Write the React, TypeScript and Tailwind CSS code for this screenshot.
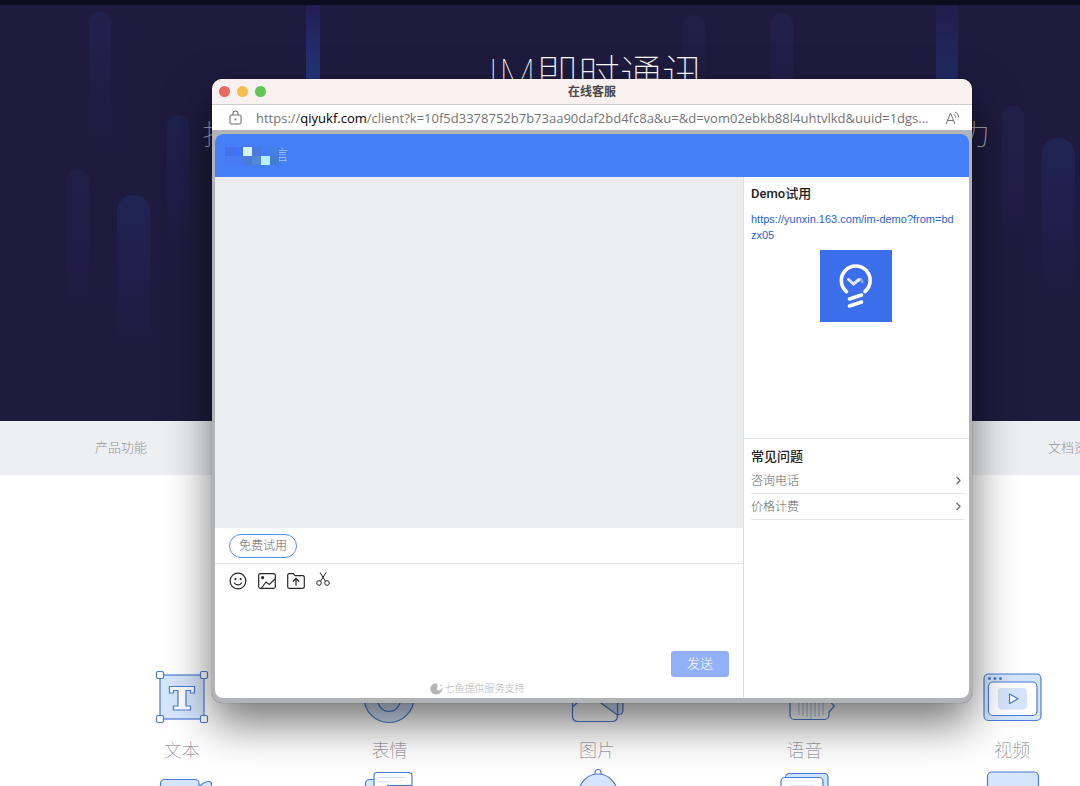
import type { ReactNode } from "react";
import { ChevronRight } from "lucide-react";

interface Feature {
  id: string;
  label?: string;
  icon: ReactNode;
}

const bars = [
  { x: 89, y: 12, w: 22, h: 178, tone: "navy", opacity: 0.6 },
  { x: 67, y: 170, w: 22, h: 165, tone: "violet", opacity: 0.6 },
  { x: 117, y: 195, w: 33, h: 185, tone: "navy", opacity: 0.9 },
  { x: 167, y: 115, w: 22, h: 180, tone: "navy", opacity: 0.6 },
  { x: 683, y: 15, w: 22, h: 160, tone: "violet", opacity: 0.6 },
  { x: 771, y: 13, w: 22, h: 170, tone: "violet", opacity: 0.8 },
  { x: 1002, y: 106, w: 22, h: 160, tone: "violet", opacity: 0.9 },
  { x: 1042, y: 138, w: 33, h: 190, tone: "navy", opacity: 0.9 },
];

const mosaic = [
  "bg-[#4571e8]",
  "bg-[#4172fb]",
  "bg-[#d5f6ff]",
  "bg-[#4b79df]",
  "bg-[#447df5]",
  "bg-[#4281e0]",
  "bg-[#4a7af3]",
  "bg-[#4a7af3]",
  "bg-[#4b7bd9]",
  "bg-[#5288d8]",
  "bg-[#baf1ff]",
  "bg-[#427cd6]",
];

const features: Feature[] = [
  {
    id: "text",
    label: "文本",
    icon: (
      <>
        <rect x="8" y="8" width="44" height="44" fill="#d5e5fb" />
        <path
          d="M17.5 19.5h25v6.5h-4v-2.5h-4.500v15.500h4.500v4h-17v-4H26V23.500h-4.500V26h-4z"
          fill="#fff"
        />
        <g fill="#fff">
          <rect x="4.500" y="4.500" width="7" height="7" rx="1.500" />
          <rect x="48.500" y="4.500" width="7" height="7" rx="1.500" />
          <rect x="4.500" y="48.500" width="7" height="7" rx="1.500" />
          <rect x="48.500" y="48.500" width="7" height="7" rx="1.500" />
        </g>
      </>
    ),
  },
  {
    id: "emoji",
    label: "表情",
    icon: (
      <>
        <circle cx="30" cy="30.500" r="25" fill="#d5e5fb" />
        <path d="M19 36c2 5.500 6 8.500 11 8.500s9-3 11-8.500" />
      </>
    ),
  },
  {
    id: "image",
    label: "图片",
    icon: (
      <>
        <rect x="12" y="6" width="44" height="41.500" rx="4" fill="#d5e5fb" />
        <rect x="5.500" y="12" width="45" height="42.500" rx="5" fill="#fff" />
        <path d="M5.500 40l6-5.500" />
        <path d="M33 36l17.500 12V36z" fill="#d5e5fb" stroke="none" />
        <path d="M50.500 30v20M27 31l23.500 17" />
      </>
    ),
  },
  {
    id: "voice",
    label: "语音",
    icon: (
      <>
        <path
          d="M15 12h35a4 4 0 0 1 4 4v18l5.500 5-5.500 6v3a4.500 4.500 0 0 1-4.500 4.500H19.500A4.500 4.500 0 0 1 15 48z"
          fill="#fff"
        />
        <path d="M24 30v18M28 28v21M32 30v20M36 28v24M40 30v20M44 28v21M48 30v18" stroke="#b9cff1" />
      </>
    ),
  },
  {
    id: "video",
    label: "视频",
    icon: (
      <>
        <rect x="2" y="7" width="57" height="46.500" rx="4.500" fill="#d5e5fb" />
        <rect x="6.500" y="15" width="48.500" height="33.500" rx="4.500" fill="#fff" />
        <rect x="16" y="21" width="29" height="21.500" rx="4" fill="#d5e5fb" stroke="none" />
        <path d="M27.500 27v9.500l8.500-4.700z" fill="#fff" strokeLinejoin="round" />
        <g fill="#4b7bd5" stroke="none">
          <circle cx="7.500" cy="11.500" r="1.500" />
          <circle cx="13" cy="11.500" r="1.500" />
          <circle cx="18.500" cy="11.500" r="1.500" />
        </g>
      </>
    ),
  },
  {
    id: "video-call",
    icon: (
      <>
        <path d="M47 20c3-3.500 7-5.500 10-5.500 1.500 0 2.500 1 2.500 2.500v31H47z" fill="#d5e5fb" />
        <rect x="8.500" y="12.500" width="38.500" height="40" rx="4" fill="#d5e5fb" />
      </>
    ),
  },
  {
    id: "message",
    icon: (
      <>
        <rect x="6.500" y="12.500" width="20" height="40" rx="4" fill="#d5e5fb" />
        <rect x="15" y="5.500" width="38" height="46" rx="3.500" fill="#fff" />
        <path d="M19 10.500h27M19 15h13" stroke="#c9dcfa" />
        <path d="M28 18.500h25" />
      </>
    ),
  },
  {
    id: "push",
    icon: (
      <>
        <path d="M28 8V5.500a3 3 0 0 1 6 0V8" fill="#fff" />
        <path d="M12 50V26a19 19 0 0 1 38 0v24z" fill="#d5e5fb" />
      </>
    ),
  },
  {
    id: "history",
    icon: (
      <>
        <rect x="10.500" y="6.500" width="42.500" height="44" rx="4" fill="#cfe4fd" />
        <rect x="6" y="10.500" width="42" height="44" rx="4" fill="#fff" />
        <path d="M14 19h25" stroke="#c9dcfa" />
      </>
    ),
  },
  {
    id: "custom",
    icon: <rect x="5.500" y="5" width="51" height="46" rx="4.500" fill="#d5e5fb" />,
  },
];

function Hero() {
  return (
    <header className="relative h-[421px] overflow-hidden border-t-[5px] border-[#0d0b1e] bg-[#1e1b3e]">
      <svg className="absolute inset-x-0 -top-[5px] h-[421px] w-full" aria-hidden="true">
        <defs>
          <linearGradient id="navy" x1="0" y1="0" x2="0" y2="1">
            <stop offset="0" stopColor="#1e2657" />
            <stop offset="0.5" stopColor="#231c4b" />
            <stop offset="1" stopColor="#1e1b3e" stopOpacity="0" />
          </linearGradient>
          <linearGradient id="violet" x1="0" y1="0" x2="0" y2="1">
            <stop offset="0" stopColor="#21224c" />
            <stop offset="0.6" stopColor="#241c4a" />
            <stop offset="1" stopColor="#1e1b3e" stopOpacity="0" />
          </linearGradient>
          <linearGradient id="beam" x1="0" y1="0" x2="0" y2="1">
            <stop offset="0" stopColor="#231d54" />
            <stop offset="1" stopColor="#223679" />
          </linearGradient>
        </defs>
        {bars.map((bar) => (
          <rect
            key={bar.x}
            x={bar.x}
            y={bar.y}
            width={bar.w}
            height={bar.h}
            rx={bar.w / 2}
            fill={`url(#${bar.tone})`}
            opacity={bar.opacity}
          />
        ))}
        <rect x="306" y="5" width="14" height="75" fill="url(#beam)" />
        <rect x="936" y="5" width="22" height="75" fill="url(#beam)" opacity="0.6" />
      </svg>
      <div className="relative flex w-[1192px] flex-col items-center gap-3 pt-[46px] text-white">
        <h1 className="text-[42px] leading-[48px] font-light whitespace-nowrap">
          <span className="font-thin">IM即时通讯</span>
        </h1>
        <p className="flex w-[787px] justify-between text-[28px] leading-[48px] font-thin opacity-70">
          <span>打</span>
          <span>力</span>
        </p>
      </div>
    </header>
  );
}

function FeatureGrid() {
  return (
    <section className="ml-[78px] grid w-[1038px] grid-cols-5 gap-y-1 pt-48">
      {features.map((feature) => (
        <div key={feature.id} className="flex flex-col items-center gap-3">
          <svg width="60" height="60" viewBox="0 0 60 60" fill="none" stroke="#4b7bd5" strokeWidth="1.2">
            {feature.icon}
          </svg>
          {feature.label && (
            <span className="text-lg leading-6 font-thin text-[#777985]">{feature.label}</span>
          )}
        </div>
      ))}
    </section>
  );
}

function TitleBar() {
  return (
    <div className="flex h-[26px] items-center border-b border-[#cfcacb] bg-[#f9f0f0] px-[7px]">
      <div className="flex flex-1 gap-[7px]">
        <button aria-label="关闭" className="size-[11px] rounded-full bg-[#eb6a5e]" />
        <button aria-label="最小化" className="size-[11px] rounded-full bg-[#f4be50]" />
        <button aria-label="缩放" className="size-[11px] rounded-full bg-[#61c455]" />
      </div>
      <h2 className="text-xs font-bold text-[#4b4647]">在线客服</h2>
      <div className="flex-1" />
    </div>
  );
}

function AddressBar() {
  return (
    <div className="flex h-[25px] items-center bg-white pr-3 pl-[17px] text-[#737373]">
      <svg width="13" height="15" viewBox="0 0 13 15" fill="none" stroke="currentColor" strokeWidth="1.1" className="shrink-0">
        <rect x="1" y="5" width="11" height="9" rx="1.500" />
        <path d="M4 5V3.500a2.500 2.500 0 0 1 5 0V5" />
        <circle cx="6.500" cy="9.500" r="0.500" fill="currentColor" />
      </svg>
      <span className="ml-3.5 flex-1 font-['Open_Sans'] text-[13px] leading-5 whitespace-nowrap">
        https://<span className="text-black">qiyukf.com</span>
        /client?k=10f5d3378752b7b73aa90daf2bd4fc8a&amp;u=&amp;d=vom02ebkb88l4uhtvlkd&amp;uuid=1dgs...
      </span>
      <button aria-label="大声朗读" className="shrink-0">
        <svg width="15" height="14" viewBox="0 0 15 14" fill="none" stroke="currentColor" strokeWidth="1">
          <path d="M1 13L5.500 2l4.500 11M2.500 9.500h6" />
          <path d="M8.500 3.500c1.300.6 2 1.700 2 3.200M10 1c2.300 1 3.600 3 3.600 5.500" />
        </svg>
      </button>
    </div>
  );
}

function ChatPane() {
  return (
    <main className="flex flex-1 flex-col">
      <div className="flex-1 bg-[#ecedef]" />
      <div className="flex h-[36px] items-center border-b border-[#e2e4e8] px-[14px]">
        <button className="h-6 rounded-full border border-[#5b8df0] px-[9px] text-xs font-light text-[#666]">
          免费试用
        </button>
      </div>
      <form className="flex h-[134px] flex-col" onSubmit={(e) => e.preventDefault()}>
        <div className="flex items-center gap-[11px] px-[14px] pt-2 text-[#262626]">
          <button type="button" aria-label="表情">
            <svg width="18" height="18" viewBox="0 0 18 18" fill="none" stroke="currentColor" strokeWidth="1.2">
              <circle cx="9" cy="9" r="7.900" />
              <path d="M5.500 11c.8 1.300 2 1.900 3.500 1.900s2.700-.6 3.500-1.900" strokeLinecap="round" />
              <circle cx="6.400" cy="7" r="0.500" fill="currentColor" />
              <circle cx="11.600" cy="7" r="0.500" fill="currentColor" />
            </svg>
          </button>
          <button type="button" aria-label="图片">
            <svg width="18" height="18" viewBox="0 0 18 18" fill="none" stroke="currentColor" strokeWidth="1.2">
              <rect x="0.700" y="1.700" width="16.600" height="14.600" rx="1.500" />
              <path d="M3.500 16l4.500-6 3.300 2.500 5.700-5.500" />
              <circle cx="4.600" cy="5.600" r="1" fill="currentColor" />
            </svg>
          </button>
          <button type="button" aria-label="文件">
            <svg width="18" height="18" viewBox="0 0 18 18" fill="none" stroke="currentColor" strokeWidth="1.2">
              <path d="M.7 3.200a1.500 1.500 0 0 1 1.500-1.500h4.300l1.500 2h7.800a1.500 1.500 0 0 1 1.500 1.500v9.600a1.500 1.500 0 0 1-1.500 1.500H2.200a1.500 1.500 0 0 1-1.500-1.500z" />
              <path d="M9 13.800V6.500M5.800 9.500L9 6.400l3.200 3.100" />
            </svg>
          </button>
          <button type="button" aria-label="截图" className="mb-1">
            <svg width="14" height="14" viewBox="0 0 14 14" fill="none" stroke="currentColor" strokeWidth="1">
              <path d="M4 .5l5.500 8.800M10 .5L4.500 9.300" />
              <circle cx="3" cy="11" r="2.300" />
              <circle cx="11" cy="11" r="2.300" />
            </svg>
          </button>
        </div>
        <textarea aria-label="输入消息" className="mt-1 flex-1 resize-none px-[14px] text-xs outline-none" />
        <div className="flex justify-end px-[14px]">
          <button className="h-[26px] w-[58px] rounded-[3px] bg-[#93b0fa] text-[13px] font-light text-white">
            发送
          </button>
        </div>
        <div className="flex h-[21px] items-center justify-center gap-0.5 pt-0.5 pr-1 text-[10px] font-light text-[#b4b4b4]">
          <svg width="13" height="12" viewBox="0 0 13 12" fill="#b5b5b5">
            <path d="M6 .5C2.500.2.3 2.800.3 5.800c0 3.300 2.600 5.700 5.800 5.700 3.700 0 6.600-2.800 6.700-7.500-.8 2.300-2 3.500-3.700 3.500C7.200 7.500 6.700 6 7.100 4.700 7.500 3.200 8 1 6 .5z" />
            <circle cx="11" cy="2.500" r="0.800" />
          </svg>
          七鱼提供服务支持
        </div>
      </form>
    </main>
  );
}

function Sidebar() {
  const questions = ["咨询电话", "价格计费"];

  return (
    <aside className="w-[226px] border-l border-[#dcdee2] text-[#222]">
      <section className="flex h-[262px] flex-col border-b border-[#e2e4e8] px-2 pt-2 pl-[7px]">
        <h3 className="font-[Roboto,'Noto_Sans_CJK_SC',sans-serif] text-[13px] leading-[18px] font-medium">Demo试用</h3>
        <a
          href="https://yunxin.163.com/im-demo?from=bdzx05"
          className="mt-2 pr-1 font-['Liberation_Sans'] text-[11px] leading-4 break-all text-[#2a62d0]"
        >
          https://yunxin.163.com/im-demo?from=bdzx05
        </a>
        <svg width="72" height="72" viewBox="0 0 72 72" fill="none" strokeLinecap="round" className="mt-[7px] self-center bg-[#3b6eea]">
          <path d="M26.500 41.500A14.400 14.400 0 1 1 45 41.500" stroke="#fff" strokeWidth="3.600" />
          <path d="M28.500 29.500l5 4.500 5.500-4.500" stroke="#fff" strokeWidth="3" opacity="0.85" />
          <path d="M38 31l3-1.500 1.500 2.500" stroke="#fff" strokeWidth="2.500" opacity="0.4" />
          <path d="M29.500 49l12-4M29.500 56l12-4" stroke="#fff" strokeWidth="3.600" />
        </svg>
      </section>
      <section className="pt-2 pr-1 pl-[7px]">
        <h3 className="text-[13px] leading-[18px] font-medium">常见问题</h3>
        <ul className="mt-[3px]">
          {questions.map((question) => (
            <li key={question} className="border-b border-[#e2e4e8]">
              <button className="flex h-[25px] w-full items-center justify-between text-xs font-light text-[#666]">
                {question}
                <ChevronRight size={13} strokeWidth={2.2} />
              </button>
            </li>
          ))}
        </ul>
      </section>
    </aside>
  );
}

export default function App() {
  return (
    <div className="relative h-screen overflow-hidden bg-white font-[Inter,'Noto_Sans_CJK_SC',sans-serif]">
      <Hero />
      <nav className="flex h-[54px] items-center gap-[901px] overflow-hidden bg-[#eeeff2] pl-[95px] text-[13px] font-light whitespace-nowrap text-[#92949b]">
        <a href="#features">产品功能</a>
        <a href="#docs">文档资料</a>
      </nav>
      <FeatureGrid />

      {/* customer service pop-up window */}
      <div className="absolute top-[79px] left-[212px] w-[760px] overflow-hidden rounded-[10px] bg-[#b1b3b7] shadow-[0_20px_45px_rgba(0,0,0,0.55),0_0_1px_rgba(0,0,0,0.6)]">
        <TitleBar />
        <AddressBar />
        <div className="px-[3px] pt-1 pb-[5px]">
          <div className="overflow-hidden rounded-lg bg-white">
            <div className="flex h-[43px] items-center bg-[#457ff7] pl-[10px]">
              <div className="grid grid-cols-6">
                {mosaic.map((color, i) => (
                  <span key={i} className={`size-[9px] ${color}`} />
                ))}
              </div>
              <span className="flex w-[9px] justify-end overflow-hidden text-[15px] font-light text-[#a9c5ff]">信</span>
            </div>
            <div className="flex h-[521px]">
              <ChatPane />
              <Sidebar />
            </div>
          </div>
        </div>
      </div>
    </div>
  );
}
